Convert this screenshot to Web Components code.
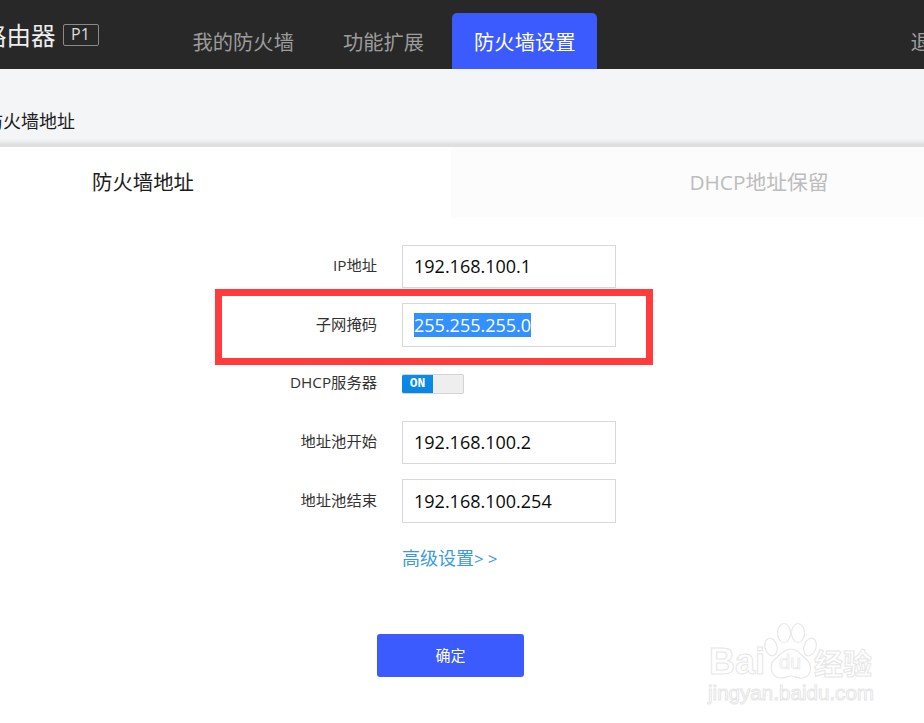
<!DOCTYPE html>
<html lang="zh">
<head>
<meta charset="utf-8">
<title>防火墙设置</title>
<style>
  html, body { margin: 0; height: 723px; overflow: hidden; background: #fff; }
  body { font-family: "Open Sans", "Noto Sans CJK SC", sans-serif; position: relative; }
</style>
</head>
<body>
<template id="tpl-header">
  <style>
    :host { display: flex; height: 69px; width: 960px; background: #282828; align-items: flex-end; white-space: nowrap; }
    .logo { display: flex; align-items: center; height: 69px; margin-left: -18px; margin-right: 72px; color: #eee; font-size: 24.5px; }
    .badge { display: inline-block; box-sizing: border-box; margin-left: 7px; width: 36px; height: 22px; line-height: 19px; text-align: center; border: 1.5px solid #8a8a8a; border-radius: 2px; font-size: 16px; font-weight: 400; color: #ddd; }
    nav { display: flex; gap: 5px; }
    .exit { margin-left: 313px; height: 56px; line-height: 58px; font-size: 20.3px; color: #9c9c9c; }
  </style>
  <div class="logo">路由器<span class="badge">P1</span></div>
  <nav><slot></slot></nav>
  <div class="exit">退出</div>
</template>

<template id="tpl-nav-tab">
  <style>
    :host { display: block; height: 56px; line-height: 58px; padding: 0 22px; font-size: 20.3px; color: #9c9c9c; border-radius: 5px 5px 0 0; }
    :host([active]) { background: #3b5bff; color: #fff; margin-left: 1px; }
  </style>
  <slot></slot>
</template>

<template id="tpl-crumb">
  <style>
    :host { display: block; height: 76px; background: #f4f5f7; box-sizing: border-box; padding-top: 39px; margin-left: -15px; font-size: 18px; line-height: 26px; color: #1c1c1c; white-space: nowrap; width: 939px; }
  </style>
  <slot></slot>
</template>

<template id="tpl-card">
  <style>
    :host { display: block; width: 1232px; margin-left: -165px; background: #fff; border-top: 2px solid #dfdfdf; box-shadow: 0 -2px 5px rgba(0,0,0,.12); position: relative; }
    .tabs { display: grid; grid-template-columns: 616px 616px; height: 70px; }
    .tab { display: flex; align-items: center; justify-content: center; box-sizing: border-box; padding-bottom: 3px; font-size: 20.4px; color: #1c1c1c; }
    .tab.off { background: #fcfcfc; color: #bdbdbd; font-size: 20.8px; }
    .body { padding: 28px 0 0 165px; height: 520px; box-sizing: border-box; }
  </style>
  <div class="tabs"><div class="tab">防火墙地址</div><div class="tab off">DHCP地址保留</div></div>
  <div class="body"><slot></slot></div>
</template>

<template id="tpl-row">
  <style>
    :host { display: grid; grid-template-columns: 377px 214px; column-gap: 25px; height: var(--row, 58px); }
    label { text-align: right; font-size: 15.3px; color: #333; line-height: var(--h, 44px); height: var(--h, 44px); position: relative; top: -1px; }
    .val { box-sizing: border-box; height: var(--h, 44px); border: 1px solid #d8d8d8; padding-left: 11px; font-size: 18px; line-height: calc(var(--h, 44px) - 2px); color: #0a0a0a; }
    ::slotted(.sel) { background: #3390ff; color: #fff; display: inline-block; line-height: 24px; height: 24px; }
  </style>
  <label></label>
  <div class="wrap"><slot></slot></div>
</template>

<template id="tpl-toggle">
  <style>
    :host { display: flex; box-sizing: border-box; width: 62px; height: 20px; margin-top: 13px; background: #eee; border: 1px solid #d4d4d4; border-left: 0; border-radius: 2px; overflow: hidden; }
    .on { width: 31px; height: 20px; margin-top: -1px; background: linear-gradient(#0b8cec, #0a84e2); color: #fff; font: bold 13px/20px "Liberation Mono", monospace; text-align: center; }
  </style>
  <div class="on">ON</div>
</template>

<template id="tpl-link">
  <style>
    :host { display: block; padding-top: 8px; font-size: 18px; line-height: 26px; color: #3a9ae2; white-space: nowrap; }
    .gt { letter-spacing: 4px; font-size: 17px; }
  </style>
  <slot></slot><span class="gt">&gt;&gt;</span>
</template>

<template id="tpl-watermark">
  <style>
    :host { position: absolute; left: 706px; top: 622px; width: 172px; height: 84px; color: #fff; }
    span { position: absolute; white-space: nowrap; color: #fff; -webkit-text-stroke: 1px #e6e6e6; font-family: "Liberation Sans", sans-serif; }
    .bai { left: 3px; top: 21px; font-size: 36px; line-height: 38px; font-weight: 700; }
    .cn { left: 108px; top: 25px; font-size: 29px; line-height: 30px; font-family: "Noto Sans CJK SC", sans-serif; font-weight: 700; }
    .url { left: 2px; top: 59px; font-size: 20.6px; line-height: 24px; }
    .du { left: 73px; top: 30px; font-size: 20px; line-height: 20px; -webkit-text-stroke: .7px #e6e6e6; }
    svg { position: absolute; left: 58px; top: 0; }
  </style>
  <svg width="54" height="58" viewBox="0 0 54 58" fill="#fff" stroke="#e8e8e8" stroke-width="1.2">
    <ellipse cx="7" cy="25" rx="6" ry="9" transform="rotate(-15 7 25)"/>
    <ellipse cx="20" cy="11" rx="6.5" ry="9.5"/>
    <ellipse cx="34" cy="11" rx="6.5" ry="9.5"/>
    <ellipse cx="46" cy="25" rx="6" ry="9" transform="rotate(18 46 25)"/>
    <path d="M27 27c7 0 10 6 15 10 6 5 7 18-4 19-5 .5-8-2-11-2s-6 2.500-11 2C6 55 5 42 11 37c5-4 9-10 16-10z"/>
  </svg>
  <span class="bai">Bai</span>
  <span class="du">du</span>
  <span class="cn">经验</span>
  <span class="url">jingyan.baidu.com</span>
</template>

<router-header>
  <nav-tab>我的防火墙</nav-tab>
  <nav-tab>功能扩展</nav-tab>
  <nav-tab active>防火墙设置</nav-tab>
</router-header>
<crumb-bar>防火墙地址</crumb-bar>
<tab-card>
  <form-row label="IP地址" h="43">192.168.100.1</form-row>
  <form-row label="子网掩码"><span class="sel">255.255.255.0</span></form-row>
  <form-row label="DHCP服务器" plain row="60"><toggle-switch></toggle-switch></form-row>
  <form-row label="地址池开始" h="43">192.168.100.2</form-row>
  <form-row label="地址池结束">192.168.100.254</form-row>
  <form-row label="" plain row="97"><more-link>高级设置</more-link></form-row>
  <submit-button>确定</submit-button>
</tab-card>
<red-box></red-box>
<baidu-watermark></baidu-watermark>

<script>
function fromTemplate(id) {
  return document.getElementById(id).content.cloneNode(true);
}

class SimpleElement extends HTMLElement {
  constructor(id) {
    super();
    this.attachShadow({ mode: 'open' }).appendChild(fromTemplate(id));
  }
}

customElements.define('router-header', class extends SimpleElement { constructor() { super('tpl-header'); } });
customElements.define('nav-tab', class extends SimpleElement { constructor() { super('tpl-nav-tab'); } });
customElements.define('crumb-bar', class extends SimpleElement { constructor() { super('tpl-crumb'); } });
customElements.define('tab-card', class extends SimpleElement { constructor() { super('tpl-card'); } });
customElements.define('toggle-switch', class extends SimpleElement { constructor() { super('tpl-toggle'); } });
customElements.define('more-link', class extends SimpleElement { constructor() { super('tpl-link'); } });
customElements.define('baidu-watermark', class extends SimpleElement { constructor() { super('tpl-watermark'); } });

class FormRow extends SimpleElement {
  constructor() { super('tpl-row'); }
  connectedCallback() {
    this.shadowRoot.querySelector('label').textContent = this.getAttribute('label');
    this.shadowRoot.querySelector('.wrap').className = this.hasAttribute('plain') ? 'plain-wrap' : 'val';
    if (this.hasAttribute('h')) this.style.setProperty('--h', this.getAttribute('h') + 'px');
    if (this.hasAttribute('row')) this.style.setProperty('--row', this.getAttribute('row') + 'px');
  }
}
customElements.define('form-row', FormRow);

class SubmitButton extends HTMLElement {
  constructor() {
    super();
    this.attachShadow({ mode: 'open' }).innerHTML = `
      <style>
        :host { display: block; margin-left: 377px; width: 147px; height: 43px; line-height: 43px; text-align: center; background: #3b5bff; color: #fff; font-size: 15px; border-radius: 3px; }
      </style>
      <slot></slot>`;
  }
}
customElements.define('submit-button', SubmitButton);

// moldura vermelha desenhada por cima da linha do formulário
class RedBox extends HTMLElement {
  constructor() {
    super();
    this.attachShadow({ mode: 'open' }).innerHTML = `
      <style>
        :host { position: absolute; left: 215px; top: 289px; width: 438px; height: 76px; box-sizing: border-box; border: 7px solid #ff3b3b; }
      </style>`;
  }
}
customElements.define('red-box', RedBox);
</script>
</body>
</html>
